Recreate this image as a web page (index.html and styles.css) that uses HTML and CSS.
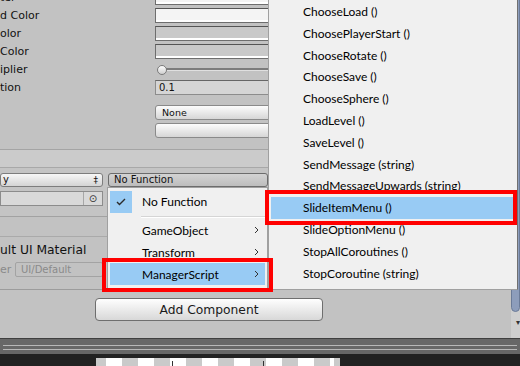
FILE: index.html
```html
<!DOCTYPE html>
<html lang="en">
<head>
    <meta charset="UTF-8">
    <title>Inspector - On Click</title>
    <link rel="stylesheet" href="styles.css">
</head>
<body>
<div class="inspector">
    <div class="props">
        <div class="row"><span class="label">ter</span><span class="swatch"></span></div>
        <div class="row"><span class="label">d Color</span><span class="swatch"></span></div>
        <div class="row"><span class="label">olor</span><span class="swatch grey"></span></div>
        <div class="row"><span class="label">Color</span><span class="swatch grey"></span></div>
        <div class="row"><span class="label">iplier</span><span class="slider"><span class="knob"></span><span class="track"></span></span></div>
        <div class="row"><span class="label">tion</span><span class="field">0.1</span></div>
        <div class="row gap"><span class="label"></span><span class="popup">None</span></div>
        <div class="row"><span class="label"></span><span class="popup"></span></div>
    </div>

    <div class="event-header"></div>
    <div class="event-body">
        <div class="event-row">
            <div class="event-left">
                <div class="dropdown">y <span class="arrows">&#8225;</span></div>
                <div class="objfield"><span class="obj-value"></span><span class="picker">&#8857;</span></div>
            </div>
            <div class="dropdown fn">No Function</div>
        </div>
    </div>
    <div class="event-foot"></div>

    <div class="material">ult UI Material</div>
    <div class="shader"><span class="dim-label">er</span><span class="dim-field">UI/Default</span></div>

    <div class="divider"></div>
    <div class="add-row"><button class="add-btn">Add Component</button></div>
</div>
<div class="toolbar"><div class="grip"></div></div>
<div class="scene"><div class="checker"></div></div>

<div class="scrollbar"><div class="thumb"></div><div class="down">&#9662;</div></div>

<!-- function picker popup -->
<div class="menu fn-menu">
    <div class="item"><span class="icon checked"><svg width="22" height="22" viewBox="0 0 22 22"><polyline points="7,11 9.5,13.5 15,8" fill="none" stroke="#2b2b2b" stroke-width="1.4"/></svg></span>No Function</div>
    <div class="sep"></div>
    <div class="item"><span class="icon"></span>GameObject<svg class="chev" width="5" height="8" viewBox="0 0 5 8"><polyline points="1,1 4,4 1,7" fill="none" stroke="#333" stroke-width="1"/></svg></div>
    <div class="item"><span class="icon"></span>Transform<svg class="chev" width="5" height="8" viewBox="0 0 5 8"><polyline points="1,1 4,4 1,7" fill="none" stroke="#333" stroke-width="1"/></svg></div>
    <div class="item active"><span class="icon"></span>ManagerScript<svg class="chev" width="5" height="8" viewBox="0 0 5 8"><polyline points="1,1 4,4 1,7" fill="none" stroke="#333" stroke-width="1"/></svg></div>
</div>

<!-- ManagerScript submenu -->
<div class="menu method-menu">
    <div class="mitem">ChooseLoad ()</div>
    <div class="mitem">ChoosePlayerStart ()</div>
    <div class="mitem">ChooseRotate ()</div>
    <div class="mitem">ChooseSave ()</div>
    <div class="mitem">ChooseSphere ()</div>
    <div class="mitem">LoadLevel ()</div>
    <div class="mitem">SaveLevel ()</div>
    <div class="mitem">SendMessage (string)</div>
    <div class="mitem">SendMessageUpwards (string)</div>
    <div class="mitem active">SlideItemMenu ()</div>
    <div class="mitem">SlideOptionMenu ()</div>
    <div class="mitem">StopAllCoroutines ()</div>
    <div class="mitem">StopCoroutine (string)</div>
</div>

<div class="mark mark-manager"></div>
<div class="mark mark-slide"></div>
</body>
</html>
```

FILE: styles.css
```css
* {
    box-sizing: border-box;
}

body {
    margin: 0;
    width: 520px;
    height: 366px;
    overflow: hidden;
    position: relative;
    background-color: #c2c2c2;
    font-family: "DejaVu Sans", sans-serif;
    font-size: 11px;
    color: #111;
}

.inspector {
    height: 338px;
    overflow: hidden;
}

/* property rows */
.props {
    margin-top: -13px;
}

.row {
    display: flex;
    align-items: flex-end;
    height: 18px;
}

.row.gap {
    margin-top: 7px;
}

.label {
    width: 155px;
    flex: none;
    align-self: center;
    padding-top: 2px;
    white-space: nowrap;
}

.swatch, .field, .popup, .slider {
    width: 150px;
    height: 15px;
    flex: none;
}

.swatch {
    background-color: #f4f4f4;
    border: 1px solid #6e6e6e;
    border-top-color: #555;
    box-shadow: inset 0 -2px #fff;
}

.swatch.grey {
    background-color: #c9c9c9;
}

.slider {
    display: flex;
    align-items: center;
    padding-left: 2px;
}

.knob {
    width: 10px;
    height: 10px;
    border-radius: 50%;
    border: 1px solid #7a7a7a;
    background: linear-gradient(#fdfdfd, #cfcfcf);
    position: relative;
    z-index: 1;
    flex: none;
}

.track {
    flex: 1;
    height: 3px;
    margin-left: -1px;
    background-color: #7c7c7c;
    border-bottom: 1px solid #e0e0e0;
}

.field {
    background-color: #d5d5d5;
    border: 1px solid #8c8c8c;
    border-top-color: #666;
    font-size: 10px;
    line-height: 13px;
    padding-left: 3px;
}

.popup {
    background: linear-gradient(#fcfcfc, #d6d6d6);
    border: 1px solid #8a8a8a;
    border-radius: 3px;
    font-size: 9.5px;
    line-height: 13px;
    padding-left: 6px;
}

/* event list */
.event-header {
    margin-top: 11px;
    height: 18px;
    border-top: 1px solid #a4a4a4;
    background-color: #cbcbcb;
}

.event-body {
    height: 50px;
    padding-top: 5px;
    border-top: 1px solid #a8a8a8;
    border-bottom: 1px solid #a2a2a2;
    background-color: #c4c4c4;
}

.event-row {
    display: flex;
    gap: 5px;
}

.event-left {
    width: 103px;
    display: flex;
    flex-direction: column;
    gap: 4px;
}

.dropdown {
    height: 14px;
    border: 1px solid #7d7d7d;
    border-radius: 3px;
    background: linear-gradient(#f7f7f7, #d4d4d4);
    font-size: 10px;
    line-height: 12px;
    padding-left: 2px;
    display: flex;
    justify-content: space-between;
}

.dropdown .arrows {
    font-size: 9px;
    padding-right: 4px;
}

.dropdown.fn {
    width: 160px;
    padding-left: 5px;
    background: linear-gradient(#d3d3d3, #bdbdbd);
    border-color: #6c6c6c;
}

.objfield {
    height: 15px;
    display: flex;
    border: 1px solid #8c8c8c;
    background-color: #d9d9d9;
}

.obj-value {
    flex: 1;
}

.picker {
    width: 19px;
    border-left: 1px solid #a7a7a7;
    font-size: 10px;
    line-height: 13px;
    text-align: center;
    color: #333;
}

.event-foot {
    height: 20px;
    border-bottom: 1px solid #aaa;
}

.material {
    margin-top: 3px;
    height: 21px;
    line-height: 21px;
    font-size: 12.3px;
    white-space: nowrap;
}

.shader {
    display: flex;
    align-items: center;
    height: 15px;
    margin-top: 1px;
}

.dim-label {
    width: 15px;
    color: #8a8a8a;
}

.dim-field {
    width: 88px;
    height: 15px;
    border: 1px solid #a3a3a3;
    border-radius: 2px;
    color: #8a8a8a;
    font-size: 10px;
    line-height: 13px;
    padding-left: 5px;
}

.divider {
    margin-top: 12px;
    border-top: 1px solid #9c9c9c;
}

.add-row {
    padding: 8px 0 0 95px;
}

.add-btn {
    width: 228px;
    height: 23px;
    border: 1px solid #6e6e6e;
    border-radius: 4px;
    background: linear-gradient(#fefefe, #d8d8d8);
    font-family: "DejaVu Sans", sans-serif;
    font-size: 12.3px;
    color: #1a1a1a;
    padding: 0;
}

/* bottom bars */
.toolbar {
    height: 16px;
    background-color: #676767;
    border-top: 1px solid #3f3f3f;
    padding: 6px 3px 0;
}

.grip {
    height: 5px;
    border-top: 1px solid #b7b7b7;
    border-bottom: 1px solid #b7b7b7;
}

.scene {
    height: 12px;
    background-color: #222;
    padding: 4px 0 0 96px;
}

.checker {
    width: 244px;
    height: 8px;
    background:
        linear-gradient(#333, #333) 76px 3px / 1px 5px no-repeat,
        linear-gradient(#333, #333) 167px 3px / 1px 5px no-repeat,
        repeating-linear-gradient(90deg, #cacaca 0 16px, #fff 16px 32px) -6px 0 / auto;
}

/* windows scrollbar peeking at the right edge */
.scrollbar {
    position: absolute;
    left: 511px;
    top: 0;
    width: 9px;
    height: 338px;
    background-color: #cfcfcf;
}

.thumb {
    height: 318px;
    margin-top: -6px;
    border: 1px solid #6b7b98;
    border-radius: 5px;
    background-color: #8d9dbb;
}

.down {
    font-size: 8px;
    line-height: 10px;
    padding: 6px 0 0 5px;
    color: #333;
}

/* popup menus */
.menu {
    position: absolute;
    background-color: #f0f0f0;
    border: 1px solid #a0a0a0;
    font-family: Lato, "Noto Sans", sans-serif;
    font-size: 12px;
    color: #000;
}

.fn-menu {
    left: 107px;
    top: 187px;
    width: 161px;
    height: 104px;
    padding: 2px 2px 0 2px;
}

.item {
    height: 22px;
    display: flex;
    align-items: center;
}

.item:first-child {
    height: 23px;
}

.item .icon {
    width: 22px;
    height: 22px;
    margin-right: 10px;
    flex: none;
}

.item .icon.checked {
    background-color: #98cbf4;
}

.item .icon svg {
    display: block;
}

.item .chev {
    margin-left: auto;
    margin-right: 6px;
}

.item.active {
    background-color: #98cbf4;
}

.sep {
    height: 2px;
    margin: 3px 0 1px 31px;
    border-top: 1px solid #d5d5d5;
    border-bottom: 1px solid #fff;
}

.method-menu {
    left: 268px;
    top: -4px;
    width: 250px;
    height: 294px;
    padding: 4px 2px 0;
    border-right-color: #707070;
}

.mitem {
    height: 21.8px;
    line-height: 21.8px;
    padding-left: 32px;
    white-space: nowrap;
}

.mitem.active {
    background-color: #98cbf4;
}

/* red annotation boxes */
.mark {
    position: absolute;
    border: 4px solid #ff0000;
}

.mark-manager {
    left: 102px;
    top: 258px;
    width: 171px;
    height: 34px;
}

.mark-slide {
    left: 265px;
    top: 190px;
    width: 252px;
    height: 35px;
}
```
